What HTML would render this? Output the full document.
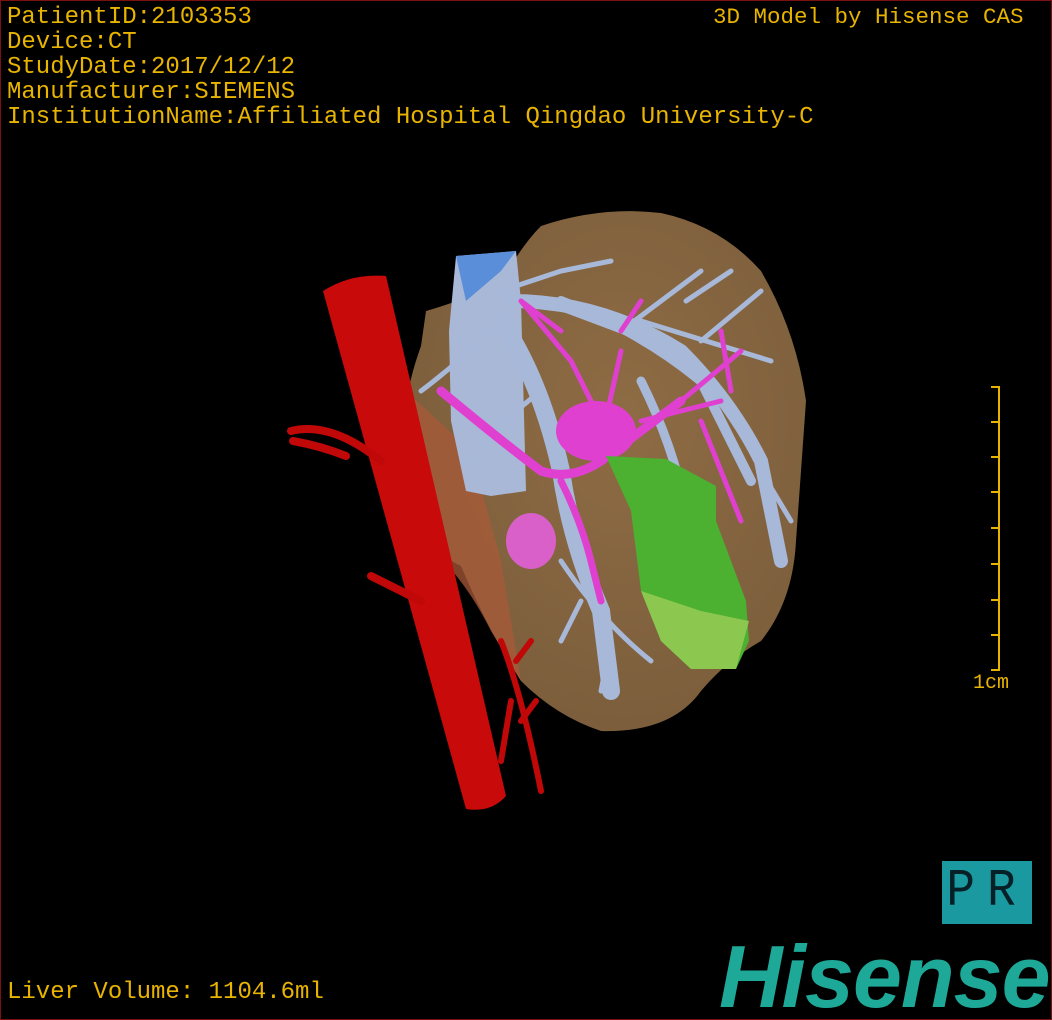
<!DOCTYPE html>
<html><head><meta charset="utf-8"><style>
html,body{margin:0;padding:0;background:#000;}
#f{position:relative;width:1052px;height:1020px;background:#000;box-sizing:border-box;border:1px solid #7a1010;overflow:hidden;}
.t{position:absolute;font-family:"Liberation Mono",monospace;color:#e8b400;font-size:24px;line-height:25px;white-space:pre;}
</style></head><body><div id="f">
<svg width="1052" height="1020" style="position:absolute;left:0;top:0">
<defs><radialGradient id="lg" cx="0.55" cy="0.4" r="0.6"><stop offset="0" stop-color="#8e6c44"/><stop offset="1" stop-color="#7c5e3c"/></radialGradient></defs>
<path d="M540,225 Q600,205 660,212 Q720,225 760,270 Q795,330 805,400 Q800,470 795,540 Q792,600 760,640 Q725,660 700,690 Q670,732 600,730 Q555,715 520,680 Q485,625 460,565 Q415,545 400,460 Q400,400 420,345 L425,310 Q460,300 500,282 Q520,245 540,225Z" fill="url(#lg)"/>
<path d="M405,390 Q395,470 420,540 Q460,570 490,630 L520,680 L500,560 L470,450 Z" fill="#a85a38" opacity=".75"/>
<path d="M322,290 Q350,272 385,275 L505,795 Q490,812 465,808 Z" fill="#c80a0a"/>
<g stroke="#c00808" fill="none" stroke-linecap="round">
<path d="M290,430 Q330,420 380,460 M292,440 Q320,445 345,455 M370,575 Q400,590 420,600" stroke-width="8"/>
<path d="M500,640 Q520,690 540,790 M510,700 L500,760 M515,660 L530,640 M520,720 L535,700" stroke-width="6"/>
</g>
<path d="M455,255 L515,250 L520,300 L525,490 L490,495 L465,490 L450,420 L448,330 Z" fill="#aab8d8"/>
<path d="M455,255 L515,250 L500,270 L465,300 Z" fill="#5a8ed8"/>
<g stroke="#a8b8d8" fill="none" stroke-linecap="round">
<path d="M500,320 Q540,380 560,470 Q570,540 600,610 L610,690" stroke-width="18"/>
<path d="M510,300 Q600,300 680,350 Q730,400 760,460 L780,560" stroke-width="14"/>
<path d="M560,300 Q640,330 700,380 L750,480" stroke-width="10"/>
<path d="M640,380 Q680,460 690,540 L700,620" stroke-width="9"/>
<path d="M500,290 L560,270 L610,260 M540,300 L620,330 L700,270 M640,320 L770,360 M700,340 L760,290 M420,390 Q460,360 500,320 M470,460 Q500,420 540,390 M560,560 Q600,620 650,660 M580,600 L560,640 M740,420 L765,470 M700,620 L725,650 M610,640 L600,690 M760,470 L790,520 M685,300 L730,270" stroke-width="5"/>
</g>
<g stroke="#e040d0" fill="none" stroke-linecap="round">
<path d="M440,390 Q500,440 540,470 Q570,480 600,460 Q640,430 680,400" stroke-width="9"/>
<path d="M560,480 Q580,520 590,560 L600,600" stroke-width="7"/>
<path d="M600,440 L620,350 M640,420 L720,400 M680,400 L740,350 M700,420 L740,520 M520,300 L570,360 L600,420 M560,330 L520,300 M720,330 L730,390 M620,330 L640,300" stroke-width="5"/>
</g>
<ellipse cx="595" cy="430" rx="40" ry="30" fill="#e040d0"/>
<ellipse cx="530" cy="540" rx="25" ry="28" fill="#d860c8"/>
<path d="M605,455 L665,458 L715,485 L715,520 L745,600 L748,640 L735,668 L690,668 L660,640 L640,590 L630,510 Z" fill="#4cb030"/>
<path d="M640,590 L700,610 L748,620 L735,668 L690,668 L660,640 Z" fill="#8cc850"/>
<g stroke="#e8b400" stroke-width="2">
<line x1="998" y1="385" x2="998" y2="670"/>
<line x1="990" y1="386" x2="998" y2="386"/><line x1="990" y1="421" x2="998" y2="421"/><line x1="990" y1="456" x2="998" y2="456"/><line x1="990" y1="491" x2="998" y2="491"/><line x1="990" y1="527" x2="998" y2="527"/><line x1="990" y1="563" x2="998" y2="563"/><line x1="990" y1="599" x2="998" y2="599"/><line x1="990" y1="634" x2="998" y2="634"/><line x1="990" y1="669" x2="998" y2="669"/>
</g>
</svg>
<div class="t" style="left:6px;top:4px">PatientID:2103353
Device:CT
StudyDate:2017/12/12
Manufacturer:SIEMENS
InstitutionName:Affiliated Hospital Qingdao University-C</div>
<div class="t" style="left:712px;top:4px;font-size:22.5px">3D Model by Hisense CAS</div>
<div class="t" style="left:972px;top:670px;font-size:20px">1cm</div>
<div class="t" style="left:6px;top:979px">Liver Volume: 1104.6ml</div>
<div style="position:absolute;left:941px;top:860px;width:90px;height:63px;background:#1a9aa0;font-family:'Liberation Mono',monospace;font-size:48px;line-height:63px;color:#062028;text-align:center;letter-spacing:12px"><span style="display:inline-block;transform:scaleY(1.1)">PR</span></div>
<div style="position:absolute;left:718px;top:928px;font-family:'Liberation Sans',sans-serif;font-weight:bold;font-style:italic;font-size:88px;line-height:96px;color:#1ea898;letter-spacing:-1px">Hisense</div>
</div></body></html>
